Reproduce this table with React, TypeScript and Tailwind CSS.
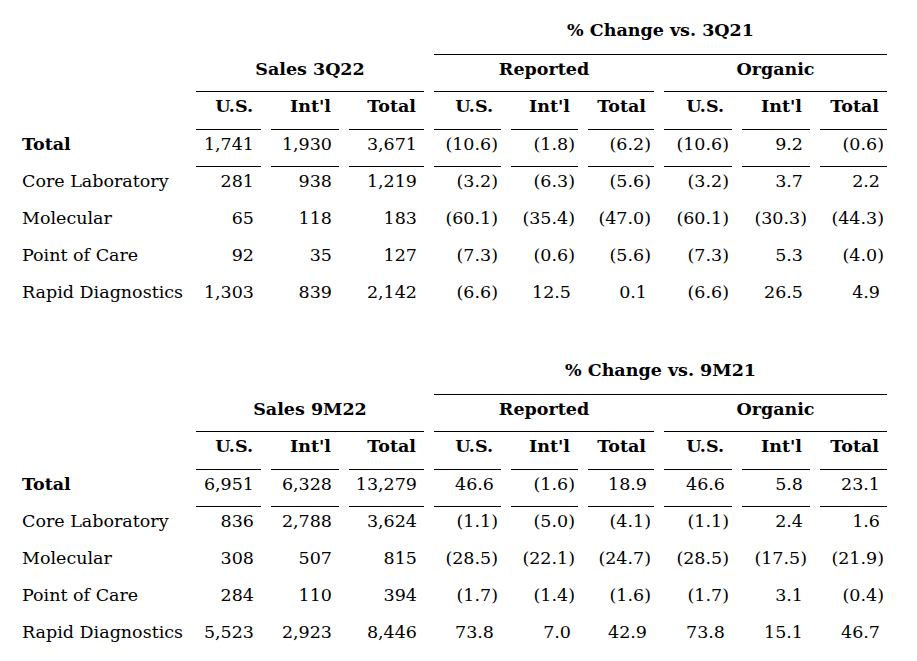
import React from "react";

type Row = { label: string; bold?: boolean; vals: string[] };

const cols =
  "grid grid-cols-[164px_65px_68px_75px_67px_67px_66px_68px_68px_67px] gap-x-[10px] grid-rows-[37px_37px_38px_37px_37px_37px_37px_37px]";

const rowStarts = ["row-start-4", "row-start-5", "row-start-6", "row-start-7", "row-start-8"];

function Num({ v, border, row }: { v: string; border?: boolean; row: string }) {
  const paren = v.endsWith(")");
  return (
    <div
      className={
        row +
        " flex items-center justify-end pb-[7px] " +
        (paren ? "pr-[3px] " : "pr-[7px] ") +
        (border ? "border-b border-black" : "")
      }
    >
      {v}
    </div>
  );
}

function Table({ sales, change, rows }: { sales: string; change: string; rows: Row[] }) {
  const heads = ["U.S.", "Int'l", "Total", "U.S.", "Int'l", "Total", "U.S.", "Int'l", "Total"];
  return (
    <div className={cols}>
      <div className="row-start-1 col-start-5 col-span-6 flex items-center justify-center pb-[11px] font-bold border-b border-black">
        {change}
      </div>
      <div className="row-start-2 col-start-2 col-span-3 flex items-center justify-center pb-[7px] font-bold border-b border-black">
        {sales}
      </div>
      <div className="row-start-2 col-start-5 col-span-3 flex items-center justify-center pb-[7px] font-bold border-b border-black">
        Reported
      </div>
      <div className="row-start-2 col-start-8 col-span-3 flex items-center justify-center pb-[7px] font-bold border-b border-black">
        Organic
      </div>
      <div className="row-start-3 col-start-1" />
      {heads.map((h, i) => (
        <div
          key={i}
          className="row-start-3 flex items-center justify-end pr-[8px] pb-[7px] font-bold border-b border-black"
        >
          {h}
        </div>
      ))}
      {rows.map((r, ri) => (
        <React.Fragment key={ri}>
          <div
            className={
              rowStarts[ri] +
              " col-start-1 flex items-center pb-[7px] whitespace-nowrap " +
              (r.bold ? "font-bold" : "")
            }
          >
            {r.label}
          </div>
          {r.vals.map((v, vi) => (
            <Num key={vi} v={v} border={ri === 0} row={rowStarts[ri]} />
          ))}
        </React.Fragment>
      ))}
    </div>
  );
}

export default function App() {
  const t1: Row[] = [
    { label: "Total", bold: true, vals: ["1,741", "1,930", "3,671", "(10.6)", "(1.8)", "(6.2)", "(10.6)", "9.2", "(0.6)"] },
    { label: "Core Laboratory", vals: ["281", "938", "1,219", "(3.2)", "(6.3)", "(5.6)", "(3.2)", "3.7", "2.2"] },
    { label: "Molecular", vals: ["65", "118", "183", "(60.1)", "(35.4)", "(47.0)", "(60.1)", "(30.3)", "(44.3)"] },
    { label: "Point of Care", vals: ["92", "35", "127", "(7.3)", "(0.6)", "(5.6)", "(7.3)", "5.3", "(4.0)"] },
    { label: "Rapid Diagnostics", vals: ["1,303", "839", "2,142", "(6.6)", "12.5", "0.1", "(6.6)", "26.5", "4.9"] },
  ];
  const t2: Row[] = [
    { label: "Total", bold: true, vals: ["6,951", "6,328", "13,279", "46.6", "(1.6)", "18.9", "46.6", "5.8", "23.1"] },
    { label: "Core Laboratory", vals: ["836", "2,788", "3,624", "(1.1)", "(5.0)", "(4.1)", "(1.1)", "2.4", "1.6"] },
    { label: "Molecular", vals: ["308", "507", "815", "(28.5)", "(22.1)", "(24.7)", "(28.5)", "(17.5)", "(21.9)"] },
    { label: "Point of Care", vals: ["284", "110", "394", "(1.7)", "(1.4)", "(1.6)", "(1.7)", "3.1", "(0.4)"] },
    { label: "Rapid Diagnostics", vals: ["5,523", "2,923", "8,446", "73.8", "7.0", "42.9", "73.8", "15.1", "46.7"] },
  ];
  return (
    <div className="w-[917px] h-[661px] bg-white text-black overflow-hidden pl-[22px] pt-[18px] text-[17.5px] leading-none [font-family:'DejaVu_Serif',serif]">
      <div className="h-[340px]">
        <Table sales="Sales 3Q22" change="% Change vs. 3Q21" rows={t1} />
      </div>
      <Table sales="Sales 9M22" change="% Change vs. 9M21" rows={t2} />
    </div>
  );
}
